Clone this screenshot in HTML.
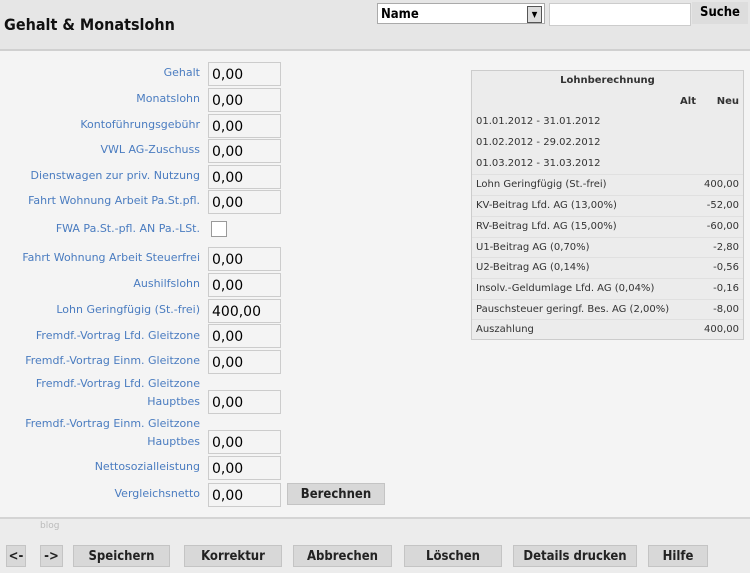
<html><head><style>
body{margin:0;width:750px;height:571px;background:#f4f4f4;font-family:"DejaVu Sans",sans-serif;position:relative;overflow:hidden}
.hd{position:absolute;left:0;top:0;width:750px;height:49px;background:#e6e6e6;border-bottom:2px solid #d0d0d0}
.t{position:absolute;left:4px;top:15px;font-size:16px;font-weight:bold;color:#111;font-family:"DejaVu Sans Condensed","DejaVu Sans",sans-serif}
.sel{position:absolute;left:377px;top:3px;width:168px;height:21px;background:#fff;border:1px solid #aaa;font-size:13px;font-weight:bold;line-height:21px;padding-left:3px;box-sizing:border-box;font-family:"DejaVu Sans Condensed","DejaVu Sans",sans-serif}
.sel i{position:absolute;right:2px;top:2px;width:13px;height:15px;border:1px solid #555;background:#ddd;font-size:8px;line-height:15px;text-align:center;font-style:normal}
.inp{position:absolute;left:549px;top:3px;width:140px;height:21px;background:#fff;border:1px solid #ccc}
.su{position:absolute;left:692px;top:2px;width:56px;height:22px;background:#ddd;font-size:13px;font-weight:bold;text-align:center;line-height:22px;font-family:"DejaVu Sans Condensed","DejaVu Sans",sans-serif}
.l{position:absolute;right:550px;font-size:11px;color:#4a7cc0;text-align:right;white-space:nowrap}
.f{position:absolute;left:208px;width:73px;height:24px;border:1px solid #ccc;box-sizing:border-box;background:#f4f4f4;font-size:14px;line-height:24px;padding-left:3px;color:#000}
.btn{position:absolute;height:22px;background:#d8d8d8;border:1px solid #c4c4c4;box-sizing:border-box;font-size:13px;font-weight:bold;text-align:center;line-height:21px;color:#222;font-family:"DejaVu Sans Condensed","DejaVu Sans",sans-serif}
.tb{position:absolute;left:471px;top:70px;width:273px;height:270px;border:1px solid #ccc;background:#ececec;box-sizing:border-box;font-size:10px;color:#333}
.r{height:20.7px;line-height:20.7px;padding:0 4px;border-top:1px solid #e0e0e0;box-sizing:border-box;position:relative}
.r b{position:absolute;right:4px;font-weight:normal}
.ft{position:absolute;left:0;top:517px;width:750px;height:54px;background:#ececec;border-top:2px solid #d4d4d4}
</style></head><body>
<div class="hd"><div class="t">Gehalt &amp; Monatslohn</div>
<div class="sel">Name<i>▼</i></div><div class="inp"></div><div class="su">Suche</div></div>

<div class="l" style="top:66px">Gehalt</div><div class="f" style="top:62px">0,00</div>
<div class="l" style="top:92px">Monatslohn</div><div class="f" style="top:88px">0,00</div>
<div class="l" style="top:118px">Kontoführungsgebühr</div><div class="f" style="top:114px">0,00</div>
<div class="l" style="top:143px">VWL AG-Zuschuss</div><div class="f" style="top:139px">0,00</div>
<div class="l" style="top:169px">Dienstwagen zur priv. Nutzung</div><div class="f" style="top:165px">0,00</div>
<div class="l" style="top:194px">Fahrt Wohnung Arbeit Pa.St.pfl.</div><div class="f" style="top:190px">0,00</div>
<div class="l" style="top:222px">FWA Pa.St.-pfl. AN Pa.-LSt.</div><div style="position:absolute;left:211px;top:221px;width:14px;height:14px;border:1px solid #999;background:#fff"></div>
<div class="l" style="top:251px">Fahrt Wohnung Arbeit Steuerfrei</div><div class="f" style="top:247px">0,00</div>
<div class="l" style="top:277px">Aushilfslohn</div><div class="f" style="top:273px">0,00</div>
<div class="l" style="top:303px">Lohn Geringfügig (St.-frei)</div><div class="f" style="top:299px">400,00</div>
<div class="l" style="top:329px">Fremdf.-Vortrag Lfd. Gleitzone</div><div class="f" style="top:324px">0,00</div>
<div class="l" style="top:354px">Fremdf.-Vortrag Einm. Gleitzone</div><div class="f" style="top:350px">0,00</div>
<div class="l" style="top:377px">Fremdf.-Vortrag Lfd. Gleitzone</div>
<div class="l" style="top:395px">Hauptbes</div><div class="f" style="top:390px">0,00</div>
<div class="l" style="top:417px">Fremdf.-Vortrag Einm. Gleitzone</div>
<div class="l" style="top:435px">Hauptbes</div><div class="f" style="top:430px">0,00</div>
<div class="l" style="top:460px">Nettosozialleistung</div><div class="f" style="top:456px">0,00</div>
<div class="l" style="top:487px">Vergleichsnetto</div><div class="f" style="top:483px">0,00</div>
<div class="btn" style="left:287px;top:483px;width:98px">Berechnen</div>

<div class="tb">
<div class="r" style="border:0;text-align:center;font-weight:bold">Lohnberechnung</div>
<div class="r" style="border:0;font-weight:bold"><span style="position:absolute;right:47px">Alt</span><span style="position:absolute;right:4px">Neu</span></div>
<div class="r" style="border:0">01.01.2012 - 31.01.2012</div>
<div class="r" style="border:0">01.02.2012 - 29.02.2012</div>
<div class="r" style="border:0">01.03.2012 - 31.03.2012</div>
<div class="r">Lohn Geringfügig (St.-frei)<b>400,00</b></div>
<div class="r">KV-Beitrag Lfd. AG (13,00%)<b>-52,00</b></div>
<div class="r">RV-Beitrag Lfd. AG (15,00%)<b>-60,00</b></div>
<div class="r">U1-Beitrag AG (0,70%)<b>-2,80</b></div>
<div class="r">U2-Beitrag AG (0,14%)<b>-0,56</b></div>
<div class="r">Insolv.-Geldumlage Lfd. AG (0,04%)<b>-0,16</b></div>
<div class="r">Pauschsteuer geringf. Bes. AG (2,00%)<b>-8,00</b></div>
<div class="r">Auszahlung<b>400,00</b></div>
</div>

<div class="ft"><div style="position:absolute;left:40px;top:2px;font-size:9px;color:#bbb">blog</div></div>
<div class="btn" style="left:6px;top:545px;width:20px">&lt;-</div>
<div class="btn" style="left:40px;top:545px;width:23px">-&gt;</div>
<div class="btn" style="left:73px;top:545px;width:97px">Speichern</div>
<div class="btn" style="left:184px;top:545px;width:98px">Korrektur</div>
<div class="btn" style="left:293px;top:545px;width:99px">Abbrechen</div>
<div class="btn" style="left:404px;top:545px;width:98px">Löschen</div>
<div class="btn" style="left:513px;top:545px;width:124px">Details drucken</div>
<div class="btn" style="left:648px;top:545px;width:60px">Hilfe</div>
</body></html>
